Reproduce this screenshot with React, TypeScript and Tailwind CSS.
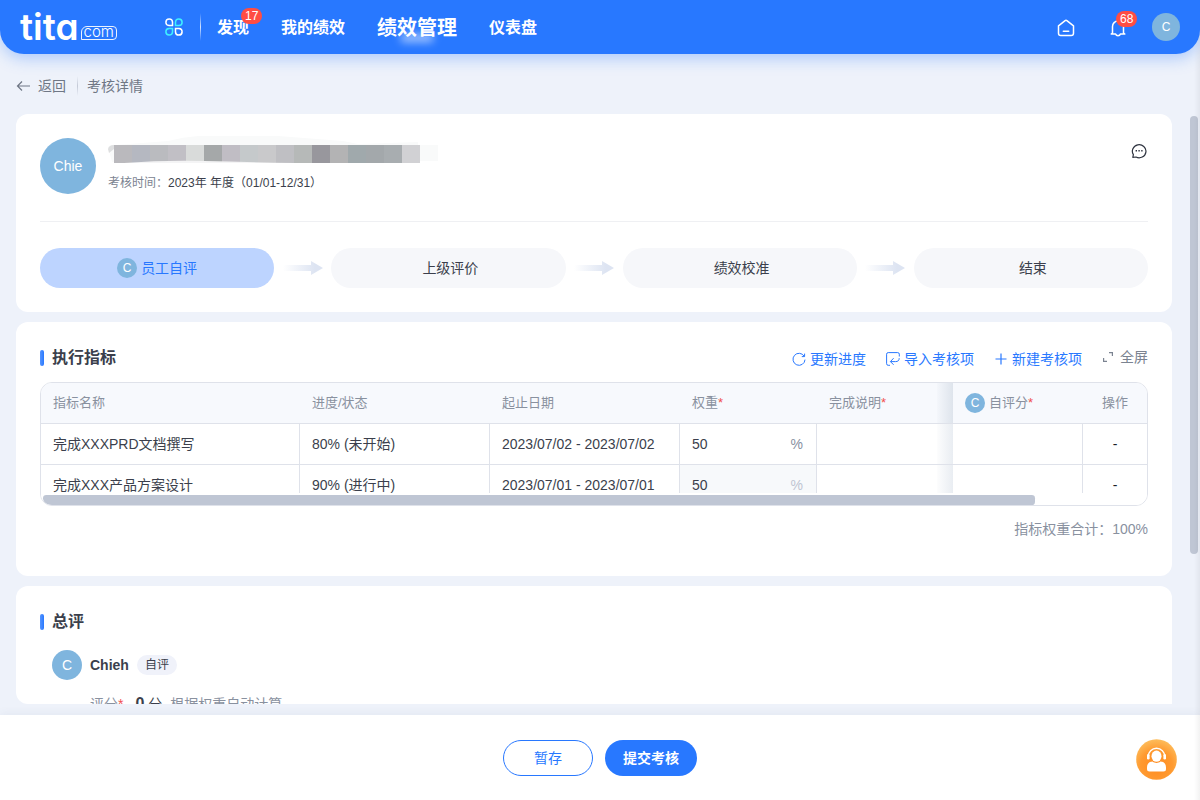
import React from "react";

type StepProps = { label: string; active?: boolean };

const steps: StepProps[] = [
  { label: "员工自评", active: true },
  { label: "上级评价" },
  { label: "绩效校准" },
  { label: "结束" },
];

const indicators = [
  {
    name: "完成XXXPRD文档撰写",
    progress: "80% (未开始)",
    period: "2023/07/02 - 2023/07/02",
    weight: "50",
    locked: false,
  },
  {
    name: "完成XXX产品方案设计",
    progress: "90% (进行中)",
    period: "2023/07/01 - 2023/07/01",
    weight: "50",
    locked: true,
  },
];

const navItems = [
  { label: "发现", badge: 17 },
  { label: "我的绩效" },
  { label: "绩效管理", current: true },
  { label: "仪表盘" },
];

const maskRow = [
  "bg-[#bab9bd]",
  "bg-[#b5b8c1]",
  "bg-[#babbbf]",
  "bg-[#c1bfc5]",
  "bg-[#d9dbda]",
  "bg-[#a5a8a9]",
  "bg-[#c0bdc4]",
  "bg-[#c5c9cb]",
  "bg-[#c9c9cb]",
  "bg-[#bfbfc3]",
  "bg-[#b6b9b8]",
  "bg-[#98979d]",
  "bg-[#b3b3b4]",
  "bg-[#a0a9ac]",
  "bg-[#a3a8ab]",
  "bg-[#a8adb0]",
  "bg-[#d1d1d4]",
];

const Badge: React.FC<{ count: number; className: string }> = ({
  count,
  className,
}) => (
  <span
    className={`absolute flex h-4 items-center rounded-full bg-[#ff4d43] px-1 text-xs font-normal text-white ${className}`}
  >
    {count}
  </span>
);

const Logo: React.FC = () => (
  <a
    href="#"
    aria-label="tita.com"
    className="flex h-[28px] w-[98px] items-end font-['Inter',sans-serif] text-white [font-feature-settings:'cv11']"
  >
    <span className="text-[37px] leading-[28px] font-semibold">tita</span>
    <span className="mb-px ml-0.5 flex h-[14px] shrink-0 items-center rounded-tl-md rounded-tr-sm rounded-br-sm border border-white/90 px-0.5 pb-0.5 text-[15px] leading-3 font-light">
      com
    </span>
  </a>
);

const Header: React.FC = () => (
  <header className="relative z-10 flex h-[54px] shrink-0 items-center rounded-b-3xl bg-[#2878ff] pr-5 pl-5 shadow-[0_4px_16px_rgba(40,120,255,0.35)]">
    <Logo />
    <button type="button" aria-label="应用" className="ml-[47px]">
      <svg width="18" height="18" viewBox="0 0 18 18" fill="none" strokeWidth="1.5">
        <path d="M7.5 7.5H4a3.3 3.3 0 1 1 3.5-3.4z" stroke="#fff" />
        <path d="M10.5 7.5V4a3.3 3.3 0 1 1 3.4 3.5z" stroke="#3ff0ff" />
        <path d="M7.5 10.5V14a3.3 3.3 0 1 1-3.4-3.5z" stroke="#3ff0ff" />
        <path d="M10.5 10.5H14a3.3 3.3 0 1 1-3.5 3.4z" stroke="#fff" />
      </svg>
    </button>
    <span className="ml-[17px] h-7 w-px bg-linear-to-b from-transparent via-white/80 to-transparent" />
    <nav className="ml-4 flex items-center gap-8 pt-0.5 text-base font-bold text-white">
      {navItems.map((item) => (
        <a
          key={item.label}
          href="#"
          className={item.current ? "relative text-xl" : "relative"}
        >
          {item.current && (
            <span className="absolute bottom-0 left-6 h-2 w-8 bg-white/60 blur-xs" />
          )}
          <span className="relative">{item.label}</span>
          {item.badge && <Badge count={item.badge} className="-top-2 left-6" />}
        </a>
      ))}
    </nav>
    <div className="ml-auto flex items-center">
      <button type="button" aria-label="首页" className="pt-0.5">
        <svg width="18" height="18" viewBox="0 0 18 18" fill="none" stroke="#fff" strokeWidth="1.5" strokeLinecap="round" strokeLinejoin="round">
          <path d="M1.5 6.8 7.8 1.8a2 2 0 0 1 2.4 0l6.3 5v7.4a2.3 2.3 0 0 1-2.3 2.3H3.8a2.3 2.3 0 0 1-2.3-2.3z" />
          <path d="M6.3 12.3h5.4" />
        </svg>
      </button>
      <button type="button" aria-label="通知" className="relative ml-[34px] pt-0.5">
        <svg width="18" height="18" viewBox="0 0 18 18" fill="none" stroke="#fff" strokeWidth="1.5" strokeLinecap="round" strokeLinejoin="round">
          <path d="M3.5 14V7.5a5.5 5.5 0 0 1 11 0V14l1.3 1h-4.4a2.5 2.3 0 0 1-4.8 0H2.2z" />
        </svg>
        <Badge count={68} className="-top-1.5 left-[7px]" />
      </button>
      <button
        type="button"
        className="ml-[25px] flex size-7 items-center justify-center rounded-full bg-[#7fb5de] text-xs text-white"
      >
        C
      </button>
    </div>
  </header>
);

const StepArrow: React.FC = () => (
  <div className="flex w-[57px] shrink-0 items-center justify-center">
    <svg width="40" height="14" viewBox="0 0 40 14">
      <defs>
        <linearGradient id="stepArrow" x1="0" x2="1" y1="0" y2="0">
          <stop offset="0" stopColor="#dde4f2" stopOpacity="0" />
          <stop offset="0.8" stopColor="#dde4f2" />
        </linearGradient>
      </defs>
      <path d="M0 4h28V0l12 7-12 7v-4H0z" fill="url(#stepArrow)" />
    </svg>
  </div>
);

const ReviewSummary: React.FC = () => (
  <section className="rounded-xl bg-white p-6">
    <div className="flex items-start">
      <div className="flex size-14 items-center justify-center rounded-full bg-[#7fb5de] text-sm text-white">
        Chie
      </div>
      <div className="ml-3">
        <div className="relative flex h-[25px] items-end">
          <svg width="332" height="30" viewBox="0 0 332 30" className="absolute -top-1 left-0">
            <path d="M0 13Q2 10 8 11L60 7Q75 3 90 2H170L235 7 250 10 310 8V11H330V27H40L4 28z" fill="#f9fafa" />
            <path d="M0 15q1-4 6-4v4l-5 4z" fill="#dedfe0" />
          </svg>
          <div className="relative ml-1.5 flex h-[18px]">
            {maskRow.map((shade, i) => (
              <span key={i} className={`w-[18px] ${shade}`} />
            ))}
            <svg width="200" height="4" viewBox="0 0 200 4" className="absolute bottom-0 left-0">
              <path d="M10 4Q50 1 90 2T180 4z" fill="#f4f4f5" />
            </svg>
          </div>
        </div>
        <p className="mt-2.5 text-xs leading-5 text-[#3b3f4c]">
          <span className="text-[#7b8391]">考核时间：</span>2023年 年度（01/01-12/31）
        </p>
      </div>
      <button type="button" aria-label="评论" className="mt-[5px] mr-px ml-auto">
        <svg width="16" height="16" viewBox="0 0 16 16" fill="none" stroke="#2f3440" strokeWidth="1.2">
          <path d="M1.8 14.3l.6-2.6A6.8 6.5 0 1 1 5 14z" strokeLinejoin="round" />
          <path d="M4.6 7.8h1.4M7.4 7.8h1.4M10.2 7.8h1.4" strokeWidth="1.6" />
        </svg>
      </button>
    </div>
    <ol className="mt-[27px] flex border-t border-[#eff0f3] pt-[26px]">
      {steps.map((step, i) => (
        <React.Fragment key={step.label}>
          {i > 0 && <StepArrow />}
          <li
            className={`flex h-10 flex-1 items-center justify-center rounded-full text-sm ${
              step.active ? "bg-[#bdd4ff] text-[#2878ff]" : "bg-[#f6f7fa] text-[#3b3f4c]"
            }`}
          >
            {step.active && (
              <span className="flex size-5 items-center justify-center rounded-full bg-[#7fb5de] text-xs text-white">
                C
              </span>
            )}
            <span className="ml-1">{step.label}</span>
          </li>
        </React.Fragment>
      ))}
    </ol>
  </section>
);

const SectionTitle: React.FC<{ children: React.ReactNode }> = ({ children }) => (
  <h2 className="flex items-center text-base leading-6 font-bold text-[#3b3f4c]">
    <span className="mr-2 h-4 w-1 rounded-xs bg-linear-to-r from-[#5595ff] to-[#2878ff]" />
    {children}
  </h2>
);

const Required = () => <span className="text-[#f05050]">*</span>;

const StickyShade: React.FC<{ className?: string }> = ({ className = "" }) => (
  <span
    className={`pointer-events-none absolute inset-y-0 right-0 w-4 bg-linear-to-r from-[#d8dfe8]/10 to-[#d8dfe8]/80 ${className}`}
  />
);

const headCell = "h-[41px] border-b border-[#dfe2ea] bg-[#f7f9fd] px-3 font-normal";
const bodyCell = "h-[41px] border-b border-[#dfe2ea] px-3";

const IndicatorTable: React.FC = () => (
  <div className="relative mt-3 h-[124px] overflow-hidden rounded-xl border border-[#dfe2ea]">
    <table className="w-full table-fixed border-separate border-spacing-0 text-sm text-[#3b3f4c]">
      <colgroup>
        <col />
        <col className="w-[190px]" />
        <col className="w-[190px]" />
        <col className="w-[137px]" />
        <col className="w-[136px]" />
        <col className="w-[130px]" />
        <col className="w-[64px]" />
      </colgroup>
      <thead className="text-left text-[13px] text-[#89919f]">
        <tr>
          <th className={headCell}>指标名称</th>
          <th className={headCell}>进度/状态</th>
          <th className={headCell}>起止日期</th>
          <th className={headCell}>
            权重
            <Required />
          </th>
          <th className={`relative ${headCell}`}>
            完成说明
            <Required />
            <StickyShade />
          </th>
          <th className={headCell}>
            <span className="flex items-center">
              <span className="mr-1 flex size-5 items-center justify-center rounded-full bg-[#7fb5de] text-xs text-white">
                C
              </span>
              自评分
              <Required />
            </span>
          </th>
          <th className={`${headCell} text-center`}>操作</th>
        </tr>
      </thead>
      <tbody>
        {indicators.map((row) => (
          <tr key={row.name}>
            <td className={`${bodyCell} border-r`}>{row.name}</td>
            <td className={`${bodyCell} border-r`}>{row.progress}</td>
            <td className={`${bodyCell} border-r whitespace-nowrap`}>{row.period}</td>
            <td className={`${bodyCell} border-r ${row.locked ? "bg-[#f7f9fb]" : ""}`}>
              <label className="flex items-center">
                <input
                  type="text"
                  aria-label={`${row.name} 权重`}
                  defaultValue={row.weight}
                  disabled={row.locked}
                  className="w-full min-w-0 bg-transparent outline-none"
                />
                <span className={row.locked ? "mr-px text-[#bfc5d2]" : "mr-px text-[#89919f]"}>
                  %
                </span>
              </label>
            </td>
            <td className={`relative ${bodyCell}`}>
              <input
                type="text"
                aria-label={`${row.name} 完成说明`}
                className="w-full bg-transparent outline-none"
              />
              <StickyShade className="opacity-70" />
            </td>
            <td className={`${bodyCell} border-r`}>
              <input
                type="text"
                aria-label={`${row.name} 自评分`}
                className="w-full bg-transparent outline-none"
              />
            </td>
            <td className={`${bodyCell} text-center text-[#1d1f26]`}>-</td>
          </tr>
        ))}
      </tbody>
    </table>
    <div className="absolute inset-x-0 bottom-0 h-3 bg-white px-0.5 pt-0.5">
      <div className="h-2.5 w-9/10 rounded-tl-md rounded-r-md rounded-bl-xl bg-[#bfc6d4]" />
    </div>
  </div>
);

const IndicatorSection: React.FC = () => (
  <section className="mt-2.5 rounded-xl bg-white px-6 pt-6 pb-9">
    <div className="flex h-6 items-center">
      <SectionTitle>执行指标</SectionTitle>
      <div className="ml-auto flex items-center gap-5 pt-0.5 text-sm text-[#2878ff]">
        <button type="button" className="flex items-center gap-1">
          <svg width="14" height="14" viewBox="0 0 14 14" fill="none" stroke="currentColor" strokeWidth="1">
            <path d="M12.2 4.3A6 6 0 1 0 13 7.6" />
            <path d="M12.6 1.6v3H9.8" />
          </svg>
          更新进度
        </button>
        <button type="button" className="flex items-center gap-1">
          <svg width="14" height="14" viewBox="0 0 14 14" fill="none" stroke="currentColor" strokeWidth="1">
            <path d="M13.3 4.5V2.2A1.6 1.6 0 0 0 11.7.6H2.2A1.6 1.6 0 0 0 .6 2.2v9.5a1.6 1.6 0 0 0 1.6 1.6H4" />
            <path d="M13.2 6.2c0 2.4-1.4 3.4-3.6 3.4H4.6M7.6 6.2 4.4 9.6l3.2 3.2" />
          </svg>
          导入考核项
        </button>
        <button type="button" className="flex items-center gap-1">
          <svg width="14" height="14" viewBox="0 0 14 14" fill="none" stroke="currentColor" strokeWidth="1.2">
            <path d="M7 1.5v11M1.5 7h11" />
          </svg>
          新建考核项
        </button>
        <button type="button" className="flex items-center gap-1.5 pb-1 text-[#7b8391]">
          <svg width="12" height="12" viewBox="0 0 12 12" fill="none" stroke="currentColor" strokeWidth="1.2">
            <path d="M7 1.6h3.4V5M1.6 7v3.4H5" />
          </svg>
          全屏
        </button>
      </div>
    </div>
    <IndicatorTable />
    <p className="mt-3 text-right text-sm leading-[22px] text-[#89919f]">指标权重合计：100%</p>
  </section>
);

const OverallSection: React.FC = () => (
  <section className="mt-2.5 rounded-xl bg-white p-6">
    <SectionTitle>总评</SectionTitle>
    <div className="mt-4 ml-3 flex items-center">
      <span className="flex size-[30px] items-center justify-center rounded-full bg-[#7fb5de] text-sm text-white">
        C
      </span>
      <span className="ml-2 text-sm font-bold text-[#3b3f4c]">Chieh</span>
      <span className="ml-2 rounded-full bg-[#f0f2fa] px-2 text-xs leading-5 text-[#3b3f4c]">
        自评
      </span>
    </div>
    <p className="mt-3 ml-[50px] flex items-center text-sm leading-6 text-[#89919f]">
      评分
      <Required />
      <strong className="ml-3 text-base text-[#3b3f4c]">0</strong>
      <span className="ml-1 text-[#3b3f4c]">分</span>
      <span className="ml-2">根据权重自动计算</span>
    </p>
  </section>
);

const Footer: React.FC = () => (
  <footer className="relative flex h-[85px] shrink-0 items-center justify-center gap-3 bg-white shadow-[0_-2px_8px_rgba(60,80,120,0.06)]">
    <button
      type="button"
      className="h-9 w-[90px] rounded-full border border-[#2878ff] text-sm text-[#2878ff]"
    >
      暂存
    </button>
    <button
      type="button"
      className="h-9 w-[92px] rounded-full bg-[#2878ff] text-sm font-bold text-white"
    >
      提交考核
    </button>
    <button type="button" aria-label="在线客服" className="absolute right-[23px] bottom-5">
      <svg width="41" height="41" viewBox="0 0 41 41" fill="none">
        <defs>
          <radialGradient id="service" cx="0.5" cy="0.65" r="0.65">
            <stop offset="0" stopColor="#ff8a1f" />
            <stop offset="0.6" stopColor="#ff9a30" />
            <stop offset="1" stopColor="#fdbd5c" />
          </radialGradient>
        </defs>
        <circle cx="20.5" cy="20.5" r="20.3" fill="url(#service)" />
        <path d="M12.2 17.5a8.3 8.3 0 0 1 16.6 0" stroke="#fff" strokeWidth="1.4" />
        <rect x="11" y="15" width="2.6" height="5.5" rx="1.3" fill="#fff" />
        <rect x="27.4" y="15" width="2.6" height="5.5" rx="1.3" fill="#fff" />
        <ellipse cx="20.5" cy="17.2" rx="5" ry="5.6" fill="#fff" />
        <path d="M11 28.5c0-4 2.5-6 5.5-6 1.5 1 2.5 1.4 4 1.4s2.5-.4 4-1.4c3 0 5.5 2 5.5 6V30a2.5 2.5 0 0 1-2.5 2.5h-14A2.5 2.5 0 0 1 11 30z" fill="#fff" />
      </svg>
    </button>
  </footer>
);

export default function App() {
  return (
    <div className="relative flex h-screen flex-col overflow-hidden bg-[#eef2fa] font-['Liberation_Sans','Noto_Sans_CJK_SC',sans-serif]">
      <Header />
      <div className="flex h-[60px] shrink-0 items-center px-4 pt-1 text-sm text-[#6f7785]">
        <button type="button" className="flex items-center gap-2">
          <svg width="14" height="12" viewBox="0 0 14 12" fill="none" stroke="currentColor" strokeWidth="1.2">
            <path d="M14 6H1.5M6 1.5 1.5 6 6 10.5" />
          </svg>
          返回
        </button>
        <span className="mr-[9px] ml-[11px] h-5 w-px bg-linear-to-b from-transparent via-[#c3c9d6] to-transparent" />
        <h1>考核详情</h1>
      </div>
      <div className="mb-[11px] ml-4 flex min-h-0 flex-1">
        <main className="min-w-0 flex-1 overflow-hidden rounded-bl-xl">
          <ReviewSummary />
          <IndicatorSection />
          <OverallSection />
        </main>
        <div className="ml-[18px] w-2.5 pt-0.5">
          <div className="h-[438px] w-2 rounded-full bg-[#bfc6d4]" />
        </div>
      </div>
      <Footer />
      <div className="pointer-events-none absolute inset-y-0 right-0 w-1.5 bg-linear-to-r from-transparent to-black/5" />
    </div>
  );
}
